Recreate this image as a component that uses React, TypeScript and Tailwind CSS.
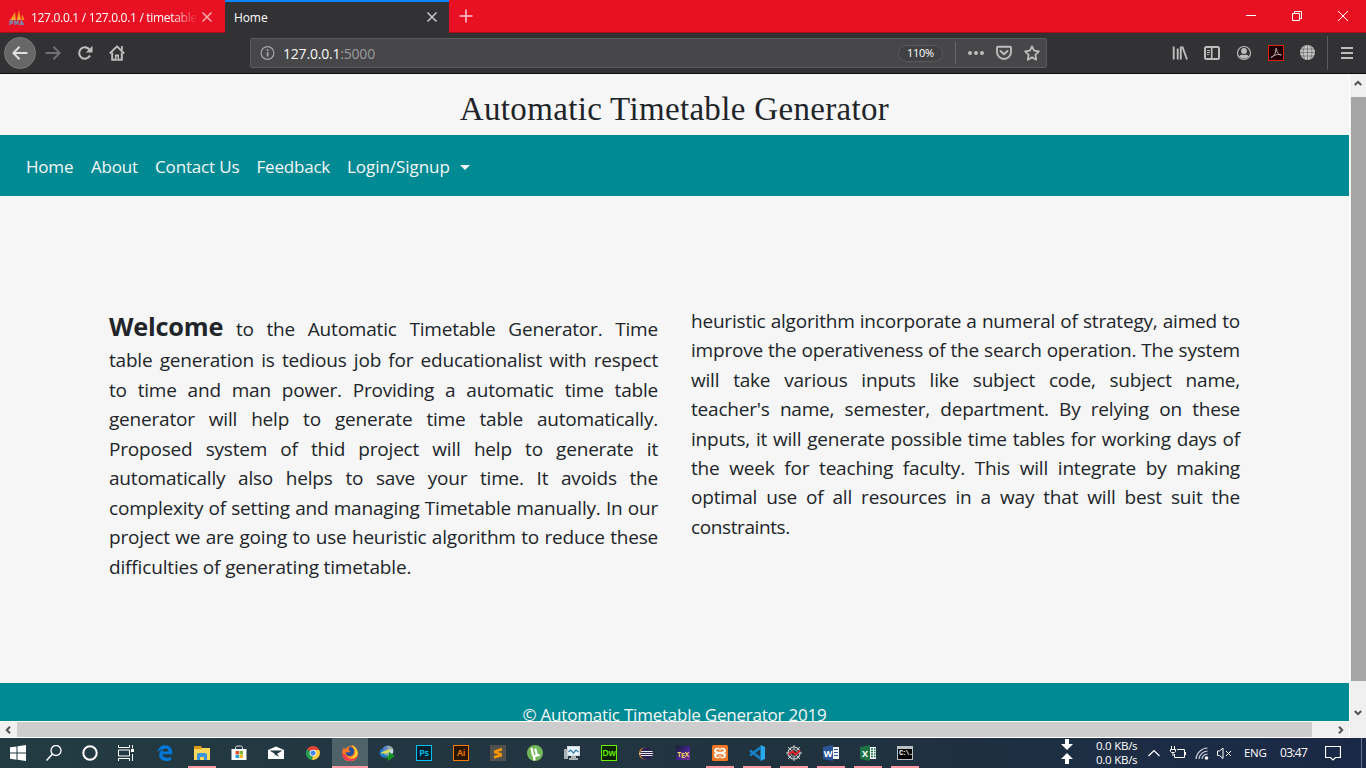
import React from "react";

type IconProps = { className?: string; children: React.ReactNode; size?: number };

function Svg({ className = "", children, size = 16 }: IconProps) {
  return (
    <svg width={size} height={size} viewBox={`0 0 ${size} ${size}`} fill="none" className={`shrink-0 ${className}`}>
      {children}
    </svg>
  );
}

const leftLines = [
  "table generation is tedious job for educationalist with respect",
  "to time and man power. Providing a automatic time table",
  "generator will help to generate time table automatically.",
  "Proposed system of thid project will help to generate it",
  "automatically also helps to save your time. It avoids the",
  "complexity of setting and managing Timetable manually. In our",
  "project we are going to use heuristic algorithm to reduce these",
];

const rightLines = [
  "heuristic algorithm incorporate a numeral of strategy, aimed to",
  "improve the operativeness of the search operation. The system",
  "will take various inputs like subject code, subject name,",
  "teacher's name, semester, department. By relying on these",
  "inputs, it will generate possible time tables for working days of",
  "the week for teaching faculty. This will integrate by making",
  "optimal use of all resources in a way that will best suit the",
];

function CloseX({ color }: { color: string }) {
  return (
    <Svg size={12}>
      <path d="M1.500 1.500l9 9M10.500 1.500l-9 9" stroke={color} strokeWidth="1.500" />
    </Svg>
  );
}

function TabBar() {
  return (
    <div className="flex h-[33px] shrink-0 border-b border-[#a60c19] bg-[#e81123] text-[12px] text-white">
      <div className="flex w-[225px] items-center pt-[3px] pl-[9px]">
        <Svg className="mr-[6px]">
          <path d="M1 10L6 2l1 8zM7.500 10L10 0l2 10zM12.500 10l.5-6 2.500 6z" fill="#f6921e" />
          <path d="M2.500 10l3-3v3zM9 10l1.500-4 .5 4z" fill="#fbc34a" />
          <path d="M1 15v-4h2.500v2H1M6 15v-4l1.500 2L9 11v4M11 15l1.500-4 1.800 4M11 14h4" stroke="#7f86a8" strokeWidth="1.400" />
        </Svg>
        <div className="w-[165px] overflow-hidden whitespace-nowrap tracking-[-0.3px] [mask-image:linear-gradient(to_right,black_140px,transparent_167px)]">
          127.0.0.1 / 127.0.0.1 / timetables
        </div>
        <div className="ml-[5px] pb-[2px]"><CloseX color="#f7a9b0" /></div>
      </div>
      <div className="-mb-px flex h-[33px] w-[224px] items-center justify-between border-t-2 border-[#0a84ff] bg-[#323234] pr-[11px] pl-[9px]">
        <span className="pt-px tracking-[-0.1px]">Home</span>
        <div className="pb-[2px]"><CloseX color="#c9c9ca" /></div>
      </div>
      <div className="flex items-center pl-[10px]">
        <Svg size={14}><path d="M7 0.500v13M0.500 7h13" stroke="#fbc5ca" strokeWidth="1.600" /></Svg>
      </div>
      <div className="ml-auto flex items-center pr-[18px]">
        <Svg size={10}><path d="M0 4.500h10" stroke="white" /></Svg>
        <Svg size={10} className="ml-[36px]"><path d="M0.500 2.500h7v7h-7zM2.500 2.500v-2h7v7h-2" stroke="white" /></Svg>
        <Svg size={10} className="ml-[36px]"><path d="M0 0l10 10M10 0L0 10" stroke="white" /></Svg>
      </div>
    </div>
  );
}

function Toolbar() {
  return (
    <div className="flex h-[41px] shrink-0 items-center border-b border-[#0c0c0d] bg-[#323234] text-[#bdbdbe]">
      <div className="ml-[4px] flex size-[32px] items-center justify-center rounded-full border border-[#7a7a7b] bg-[#676768]">
        <Svg><path d="M15.500 8H1.500M7.500 1.800L1.300 8l6.200 6.200" stroke="#e0e0e0" strokeWidth="2" /></Svg>
      </div>
      <Svg className="ml-[9px]"><path d="M0.500 8h14M8.500 1.800L14.700 8l-6.200 6.200" stroke="#717173" strokeWidth="2" /></Svg>
      <Svg className="ml-[16px]">
        <path d="M13 10.500A5.700 5.700 0 1 1 12.700 5" stroke="currentColor" strokeWidth="2.100" />
        <path d="M15.500 0.800V7.500H8.800z" fill="currentColor" />
      </Svg>
      <Svg className="ml-[16px]">
        <path d="M0.800 8.500L8 1.300l7.200 7.200" stroke="currentColor" strokeWidth="1.900" strokeLinejoin="round" />
        <path d="M3.200 7.500v7.300h9.600V7.500" stroke="currentColor" strokeWidth="2" />
        <path d="M6 15V9.500h4V15zM12 1h1.800v4H12z" fill="currentColor" />
        <path d="M7.500 11.500h1v3h-1z" fill="#323234" />
      </Svg>
      <div className="ml-[125px] flex h-[30px] w-[797px] items-center rounded-[2px] border border-[#5b5b5d] bg-[#474749] pl-[9px]">
        <Svg>
          <circle cx="7.500" cy="8" r="6.400" stroke="#a5a5a7" strokeWidth="1.200" />
          <path d="M6.700 7h1.800v4.500H6.700zM6.700 4.300h1.800V6H6.700z" fill="#a5a5a7" />
        </Svg>
        <div className="ml-[7px] text-[14px] tracking-[-0.2px] text-[#9c9c9e]">
          <span className="text-[#f9f9fa]">127.0.0.1</span>:5000
        </div>
        <div className="ml-auto flex h-[17px] w-[45px] items-center justify-center rounded-full border border-[#59595b] bg-[#414144] pt-px text-[11px] tracking-[-0.3px] text-white">110%</div>
        <div className="ml-[12px] h-[22px] w-px bg-[#646873]" />
        <Svg className="ml-[12px]">
          <circle cx="2" cy="8" r="2" fill="currentColor" />
          <circle cx="8" cy="8" r="2" fill="currentColor" />
          <circle cx="14" cy="8" r="2" fill="currentColor" />
        </Svg>
        <Svg className="ml-[12px]">
          <path d="M1.800 1.800h12.400a.8.8 0 0 1 .8.8V7a7 7 0 0 1-14 0V2.600a.8.8 0 0 1 .8-.8z" stroke="currentColor" strokeWidth="1.900" />
          <path d="M4.500 6L8 9.300 11.500 6" stroke="currentColor" strokeWidth="2" strokeLinecap="round" strokeLinejoin="round" />
        </Svg>
        <Svg className="mr-[6px] ml-[12px]">
          <path d="M8 1.300l2.100 4.400 4.800.7-3.500 3.400.8 4.900L8 12.400l-4.200 2.300.8-4.900L1.100 6.400l4.800-.7z" stroke="currentColor" strokeWidth="1.800" strokeLinejoin="round" />
        </Svg>
      </div>
      <Svg className="ml-[125px]">
        <path d="M1.700 1.500v13M5.700 3.500v11M8.800 1.500v13M10.300 1.500l4.700 13" stroke="currentColor" strokeWidth="1.900" />
      </Svg>
      <Svg className="ml-[16px]">
        <rect x="1" y="2" width="14" height="12" rx="1.500" stroke="currentColor" strokeWidth="2" />
        <path d="M7.700 2v12" stroke="currentColor" strokeWidth="1.700" />
        <path d="M3 5.500h3M3 7.500h3M3 9.500h2" stroke="currentColor" />
      </Svg>
      <Svg className="ml-[16px]">
        <circle cx="8" cy="8" r="6.500" stroke="currentColor" strokeWidth="1.200" />
        <circle cx="8" cy="6" r="2.900" fill="currentColor" />
        <path d="M3.200 11.200c1.400-1.700 3-1.700 4.800-1.200 1.800-.5 3.400-.5 4.800 1.200C11.500 13 10 13.500 8 13.500s-3.500-.5-4.800-2.300z" fill="currentColor" />
      </Svg>
      <Svg className="ml-[16px]">
        <rect x="0.500" y="0.500" width="15" height="15" fill="#200204" stroke="#d8230c" />
        <path d="M3 12.500c2.500-.5 5-4.500 4.700-8.500 0-1 1-1 .9.300C8.300 7 10.500 10 13.300 10c-3-1.300-7-.2-10.300 2.500z" stroke="#cbbcbd" strokeWidth="0.900" />
      </Svg>
      <Svg className="ml-[16px]">
        <circle cx="7.500" cy="7.500" r="7.500" fill="#c6c6c7" />
        <path d="M7.500 0v15M0 7.500h15M1 4h13M1 11h13M5 0.300c-2.500 4-2.500 10 0 14.400M10 .3c2.500 4 2.500 10 0 14.400" stroke="#707072" strokeWidth="0.800" />
      </Svg>
      <div className="ml-[11px] h-[34px] w-px bg-[#5a5a5c]" />
      <Svg className="ml-[12px]"><path d="M1 3h12M1 8h12M1 13h12" stroke="currentColor" strokeWidth="2" /></Svg>
    </div>
  );
}

function Page() {
  return (
    <div className="flex h-[647px] w-[1349px] shrink-0 flex-col overflow-hidden bg-[#f6f6f6] text-[#212529]">
      <h1 className="flex h-[61px] shrink-0 items-center justify-center pt-[9px] font-['Liberation_Serif',serif] text-[33px] leading-none tracking-[0.33px] whitespace-nowrap">
        Automatic Timetable Generator
      </h1>
      <nav className="flex h-[61px] shrink-0 items-center bg-[#008b94] pt-[3px] pl-[26px] text-[17px] tracking-[-0.2px] whitespace-nowrap text-[#f6f6f6]">
        <a className="w-[65px]">Home</a>
        <a className="w-[64px]">About</a>
        <a className="w-[101.500px] tracking-[-0.150px]">Contact Us</a>
        <a className="w-[90.500px]">Feedback</a>
        <a className="w-[113px] tracking-[-0.05px]">Login/Signup</a>
        <div className="h-0 w-0 border-x-[5px] border-t-[5px] border-x-transparent border-t-[#f6f6f6]" />
      </nav>
      <main className="flex h-[487px] shrink-0 gap-[33px] pt-[111px] pl-[109px] text-[19px] leading-[29.500px] tracking-[-0.2px] whitespace-nowrap">
        <div className="w-[549px]">
          <div className="flex h-[39px] items-baseline justify-between leading-[39px]">
            <b className="text-[25.300px]">Welcome</b>
            <span>to</span><span>the</span><span>Automatic</span><span>Timetable</span><span>Generator.</span><span>Time</span>
          </div>
          {leftLines.map((l) => (
            <div key={l} className="h-[29.500px] whitespace-normal [text-align-last:justify]">{l}</div>
          ))}
          <div className="tracking-[-0.15px]">difficulties of generating timetable.</div>
        </div>
        <div className="w-[549px]">
          {rightLines.map((l) => (
            <div key={l} className="h-[29.400px] whitespace-normal [text-align-last:justify]">{l}</div>
          ))}
          <div className="tracking-[-0.4px]">constraints.</div>
        </div>
      </main>
      <footer className="flex flex-1 justify-center bg-[#008b94] pt-[19px] text-[17px] leading-[26px] tracking-[-0.22px] text-[#f6f6f6]">
        © Automatic Timetable Generator 2019
      </footer>
    </div>
  );
}

function VScroll() {
  return (
    <div className="flex w-[17px] flex-col items-center border-l border-white bg-[#f0f0f0]">
      <div className="flex h-[23px] shrink-0 items-center justify-center pb-[5px]">
        <Svg size={8}><path d="M0.800 6L4 2.800 7.200 6" stroke="#505050" strokeWidth="2" /></Svg>
      </div>
      <div className="h-[584px] w-[15px] shrink-0 bg-[#a6a6a6]" />
      <div className="flex flex-1 items-end pb-[21px]">
        <Svg size={8}><path d="M0.800 2L4 5.200 7.200 2" stroke="#505050" strokeWidth="2" /></Svg>
      </div>
    </div>
  );
}

function AdobeTile({ text, cls }: { text: string; cls: string }) {
  return (
    <div className={`flex size-[16px] items-center justify-center border pb-px font-['Noto_Sans',sans-serif] text-[9px] leading-none font-semibold tracking-[-0.3px] ${cls}`}>{text}</div>
  );
}

function OfficeIcon({ letter, fill }: { letter: string; fill: string }) {
  return (
    <div className="flex size-[16px] items-center">
      <svg width="16" height="16" className="absolute">
        <path d="M8 2h8v12H8z" fill="#f4f6fb" />
        <path d="M0 2l10-2v16L0 14z" fill={fill} />
        {letter === "W" ? (
          <path d="M11 4.500h4M11 7.500h4M11 10.500h4" stroke={fill} />
        ) : (
          <path d="M11 4h2M14 4h1.500M11 6.500h2M14 6.500h1.500M11 9h2M14 9h1.500M11 11.500h2M14 11.500h1.500" stroke={fill} strokeWidth="1.500" />
        )}
      </svg>
      <span className="relative w-[10px] text-center text-[9px] leading-none font-bold text-white">{letter}</span>
    </div>
  );
}

const apps: { name: string; open?: boolean; active?: boolean; icon: React.ReactNode }[] = [
  { name: "edge", icon: (
    <Svg>
      <path d="M0.500 7.500C1 3 4 0.300 8 0.300c4.500 0 7.300 3 7.300 7v2H5.300c.2 2.500 2.500 3.500 4.700 3.500 1.700 0 3-.4 4.200-1.100v3.200c-1.500.8-3 1.100-5 1.100-4.500 0-7-2.500-7-6.200 0-2.500 1.500-4.500 3.800-5.500C3.500 4.600 1.700 5.600.5 7.500zM5.400 6.500h6c0-1.800-1-3-2.800-3-1.700 0-3 1.200-3.200 3z" fill="#0078d7" />
    </Svg>
  ) },
  { name: "explorer", open: true, icon: (
    <Svg>
      <path d="M0 1h7l1 2h8v4H0z" fill="#d99a16" />
      <path d="M0 4h7l1-1h8v12H0z" fill="#ffd65c" />
      <path d="M3 15V10a2 2 0 0 1 2-2h6a2 2 0 0 1 2 2v5h-3v-3H6v3z" fill="#3a93dd" />
    </Svg>
  ) },
  { name: "store", icon: (
    <Svg>
      <path d="M4.500 4V2.500A2 2 0 0 1 6.500 1h3a2 2 0 0 1 2 1.500V4" stroke="#e6e9ea" />
      <path d="M0.500 4h15v11h-15z" fill="#fff" />
      <path d="M4.500 6H8v3.500H4.500z" fill="#e8502a" /><path d="M8.500 6H12v3.500H8.500z" fill="#7db72f" />
      <path d="M4.500 10H8v3H4.500z" fill="#1a9fe0" /><path d="M8.500 10H12v3H8.500z" fill="#f7b51b" />
    </Svg>
  ) },
  { name: "mail", icon: (
    <Svg>
      <path d="M0 5l8-3.500L16 5v9H0z" fill="#fff" />
      <path d="M1.500 5.500h13L8 9.500z" fill="#243b44" /><path d="M6 9l5 3-2-3.500z" fill="#243b44" />
    </Svg>
  ) },
  { name: "chrome", icon: (
    <Svg>
      <path d="M8 8L1.900 4.500A7 7 0 0 1 14.100 4.500z" fill="#e04636" />
      <path d="M8 8h6.500a7 7 0 0 0-.9-4H8z" fill="#e04636" />
      <path d="M8 8L1.900 4.500A7 7 0 0 0 7.500 15z" fill="#28a352" />
      <path d="M8 8l-.8 7A7 7 0 0 0 14.200 5H8z" fill="#ffce42" />
      <circle cx="8" cy="8" r="3.300" fill="#f5f5f5" /><circle cx="8" cy="8" r="2.500" fill="#4285e8" />
    </Svg>
  ) },
  { name: "firefox", open: true, active: true, icon: (
    <Svg>
      <path d="M2 2.500L3.500 4.500C5 1.500 8 .8 9.500 1L10 0c4 2 6 5 6 8.500A7.800 7.800 0 0 1 .3 9C.2 6 .8 4 2 2.500z" fill="#ff7a22" />
      <path d="M.3 8C0 13 3.500 16 8 16c3.500 0 6-1.500 7.200-4.200C11 15 5 14 3.500 10z" fill="#f23a55" />
      <path d="M7.500 2.200C9 1.500 11 2.300 11.800 4.500c1.200 3.500-.8 6.500-4 6.500C5 11 3.500 9 4 7l3 .5 1.500-1.500L6.500 5z" fill="#24509f" />
      <path d="M10 0c5 2.500 6.500 7 5 10.500-1.500 3-6 4-9 2 3.500.5 6.500-1 7-4.500C13.500 5 11.500 3 10 0z" fill="#ffcf2d" />
    </Svg>
  ) },
  { name: "download", icon: (
    <Svg>
      <circle cx="9" cy="6" r="5.500" fill="#8fa9b4" />
      <path d="M3.500 5C4 2 6 .8 8 .8L8.500 5 5 7z" fill="#5d86c9" />
      <path d="M9 5l5-1v4l-4 1z" fill="#c5d5dc" />
      <path d="M2.500 4C-1 7 .5 13 7 13l2-2.500C5 11 3.500 8 5 5z" fill="#2078cf" />
      <path d="M1.500 8.500C3 6 7 6.500 12 3L9 8c-3 .5-5 .5-7.500.5z" fill="#d8df4c" />
      <path d="M10 7l6 4-7 5v-2.700c-2 .2-3-.3-4-1 2 0 4-.5 5-2z" fill="#159421" />
    </Svg>
  ) },
  { name: "ps", icon: <AdobeTile text="Ps" cls="border-[#00c0f5] bg-[#05202d] text-[#00c0f5]" /> },
  { name: "ai", icon: <AdobeTile text="Ai" cls="border-[#f57c00] bg-[#2a1500] text-[#f57c00]" /> },
  { name: "sublime", icon: (
    <Svg><path d="M0 0h16v16H0z" fill="#50504f" /><path d="M4 5.500l8-2.700v2.700L7.500 7l4.500 1.300v2.900L4 13.700V11l4.500-1.400L4 8.200z" fill="#ff9800" /></Svg>
  ) },
  { name: "torrent", icon: (
    <Svg><circle cx="8" cy="8" r="8" fill="#72b65b" /><path d="M4.500 3l1.500 7c.5 2 4 1.500 3.500-1L8.300 3.500M9.500 9c1 2 2.500 1.500 3 .5M7 11.500l.5 4" stroke="#fff" strokeWidth="2.200" /></Svg>
  ) },
  { name: "monitor", icon: (
    <Svg>
      <path d="M0 4h4v10H0z" fill="#aab2b5" /><path d="M3 1h13v10H3z" fill="#d3d8da" /><path d="M4 2h11v8H4z" fill="#e9f5fd" />
      <path d="M4.500 7l2-2 3 3 2.500-3 2.500 2" stroke="#2f79ac" strokeWidth="1.200" /><path d="M7 11h5v2h2v2H5v-2h2z" fill="#aab2b5" />
    </Svg>
  ) },
  { name: "dw", icon: <AdobeTile text="Dw" cls="border-[#67f000] bg-[#0a2604] text-[#67f000]" /> },
  { name: "eclipse", icon: (
    <Svg>
      <circle cx="7" cy="8.500" r="6" fill="#e8912b" /><circle cx="8.500" cy="8.500" r="6.200" fill="#2b2154" />
      <path d="M3 6.500h11.500M1 8.500h14M3 10.500h11.500" stroke="#e6e6f4" strokeWidth="1.200" />
    </Svg>
  ) },
  { name: "tex", icon: (
    <div className="flex h-[14px] w-[14px] items-end justify-center bg-linear-to-br from-[#161b3a] via-[#3f2288] to-[#7b3299] pb-px text-[7px] leading-[8px] font-bold tracking-[-0.4px] text-[#f3d558]">
      <span>T</span><span className="relative top-px">E</span><span>X</span>
    </div>
  ) },
  { name: "xampp", open: true, icon: (
    <Svg>
      <rect width="16" height="16" rx="1.500" fill="#f37623" />
      <rect x="2.200" y="2.700" width="11.600" height="10.600" rx="3" fill="#fff" />
      <path d="M4.800 6.200V5.600c0-.5.3-.8.800-.8h.6v1.400h3.600V4.800h.6c.5 0 .8.300.8.800v.6M4.800 9.800v.7c0 .5.300.8.800.8h.6V9.800h3.600v1.500h.6c.5 0 .8-.3.800-.8v-.7" stroke="#f37623" strokeWidth="1.200" />
      <path d="M7.400 2.500h1.200v2H7.400zM7.400 11.500h1.200v2H7.400zM2 7.400h1.500v1.200H2zM12.500 7.400H14v1.200h-1.500z" fill="#f37623" />
    </Svg>
  ) },
  { name: "code", open: true, icon: (
    <Svg><path d="M11.500 0L16 2v12l-4.500 2z" fill="#29a8ee" /><path d="M1 5.500l10.500 8M1 10.500l10.500-8" stroke="#1681c9" strokeWidth="2.500" /></Svg>
  ) },
  { name: "spyder", open: true, icon: (
    <Svg>
      <path d="M8 0v16M0 8h16M2 2l12 12M14 2L2 14" stroke="#c9cccd" />
      <circle cx="8" cy="8" r="6" stroke="#c9cccd" strokeWidth="1.200" /><circle cx="8" cy="8" r="3.500" stroke="#a9adb0" fill="#33383b" />
      <path d="M2.500 9.500L6.500 6.500l3 3 4.500-4" stroke="#e51f25" strokeWidth="2" />
    </Svg>
  ) },
  { name: "word", open: true, icon: <OfficeIcon letter="W" fill="#2a5699" /> },
  { name: "excel", open: true, icon: <OfficeIcon letter="X" fill="#1f7244" /> },
  { name: "cmd", open: true, icon: (
    <div className="h-[14px] w-[16px] border border-t-[3px] border-[#b8bfc3] bg-black pl-px font-['Liberation_Mono',monospace] text-[7px] leading-[9px] font-bold tracking-[-0.9px] text-white">C:\.</div>
  ) },
];

function Taskbar() {
  return (
    <div className="flex h-[30px] shrink-0 bg-linear-to-r from-[#233b43] via-[#21323f] via-60% to-[#1a2847] text-[12px] text-white">
      <div className="flex w-[147px] items-center">
        <div className="flex w-[36px] justify-center">
          <Svg><path d="M0 2.300L6.500 1.400v6.200H0zM7.500 1.300L16 0v7.600H7.500zM0 8.500h6.500v6.200L0 13.800zM7.500 8.500H16V16l-8.500-1.200z" fill="white" /></Svg>
        </div>
        <div className="flex w-[36px] justify-center">
          <Svg><circle cx="10" cy="5.500" r="5" stroke="white" strokeWidth="1.300" /><path d="M6.500 9L0.500 15.500" stroke="white" strokeWidth="1.500" /></Svg>
        </div>
        <div className="flex w-[36px] justify-center">
          <Svg><circle cx="8" cy="8" r="6.700" stroke="white" strokeWidth="2" /></Svg>
        </div>
        <div className="flex w-[36px] justify-center">
          <Svg><path d="M0.500 0v2.500h11V0M0.500 5h11v6h-11zM0.500 16v-2.500h11V16M14.500 0v3.500M14.500 9v7" stroke="white" /><path d="M13 4h3v3h-3z" fill="white" /></Svg>
        </div>
      </div>
      {apps.map((a) => (
        <div key={a.name} className={`mr-px flex w-[36px] flex-col items-center ${a.active ? "bg-[#4f6269]" : ""}`}>
          <div className="relative flex h-[28px] items-center pt-[2px]">{a.icon}</div>
          <div className={`h-[2px] ${a.active ? "w-full" : "w-[28px]"} ${a.open ? "bg-[#ff99a4]" : ""}`} />
        </div>
      ))}
      <div className="ml-auto flex w-[305px] items-center whitespace-nowrap">
        <svg width="12" height="28" viewBox="0 0 12 28" className="shrink-0" fill="white">
          <path d="M4 0h4v5h4l-6 6-6-6h4zM4 25h4v-5h4l-6-6-6 6h4z" />
        </svg>
        <div className="ml-[23px] w-[43px] text-[11.500px] leading-[14px] tracking-[-0.25px]">
          <div>0.0 KB/s</div>
          <div>0.0 KB/s</div>
        </div>
        <Svg size={12} className="ml-[9px]"><path d="M0.500 9L6 3.500 11.500 9" stroke="white" strokeWidth="1.200" /></Svg>
        <Svg className="ml-[10px]">
          <path d="M7 4.500h7.500v8h-10V9M15.500 7v3" stroke="white" /><path d="M1.500 1v3M4.500 1v3M0.500 4.500h5v2l-1 1h-3l-1-1zM3 8v3" stroke="white" />
        </Svg>
        <Svg size={14} className="ml-[9px]">
          <path d="M1 13A12 12 0 0 1 12.500 2M4 13a9 9 0 0 1 8.500-8M7 13a6 6 0 0 1 5.500-5" stroke="#cdd2dc" strokeWidth="1.200" />
          <circle cx="11.500" cy="12" r="1.800" fill="white" />
        </Svg>
        <Svg className="ml-[8px]">
          <path d="M0.500 6v4.500h2L6 13.500V3L2.500 6z" stroke="white" /><path d="M9 6l5 5M14 6l-5 5" stroke="white" />
        </Svg>
        <span className="ml-[11px] w-[23px] text-[11.500px] tracking-[-0.3px]">ENG</span>
        <span className="ml-[13px] w-[28px] text-[12px] tracking-[-0.7px]">03:47</span>
        <Svg size={16} className="ml-[17px]"><path d="M0.500 1.500h15v11h-5L8 15l-2.500-2.500h-5z" stroke="white" strokeWidth="1.200" /></Svg>
        <div className="ml-auto h-full w-[5px] border-l border-[#68718a]" />
      </div>
    </div>
  );
}

export default function App() {
  return (
    <div className="flex h-[768px] w-[1366px] flex-col overflow-hidden bg-white font-['Open_Sans','Noto_Sans',sans-serif]">
      <TabBar />
      <Toolbar />
      <div className="flex h-[664px] shrink-0">
        <div className="flex flex-col">
          <Page />
          <div className="flex h-[17px] items-center border-y border-white bg-[#f0f0f0]">
            <Svg size={8} className="ml-[4px]"><path d="M6 0.800L2.800 4 6 7.200" stroke="#505050" strokeWidth="2" /></Svg>
            <div className="ml-[5px] h-full w-[1295px] bg-[#cdcdcd]" />
            <Svg size={8} className="ml-[25px]"><path d="M2 0.800L5.200 4 2 7.200" stroke="#505050" strokeWidth="2" /></Svg>
          </div>
        </div>
        <VScroll />
      </div>
      <Taskbar />
    </div>
  );
}
